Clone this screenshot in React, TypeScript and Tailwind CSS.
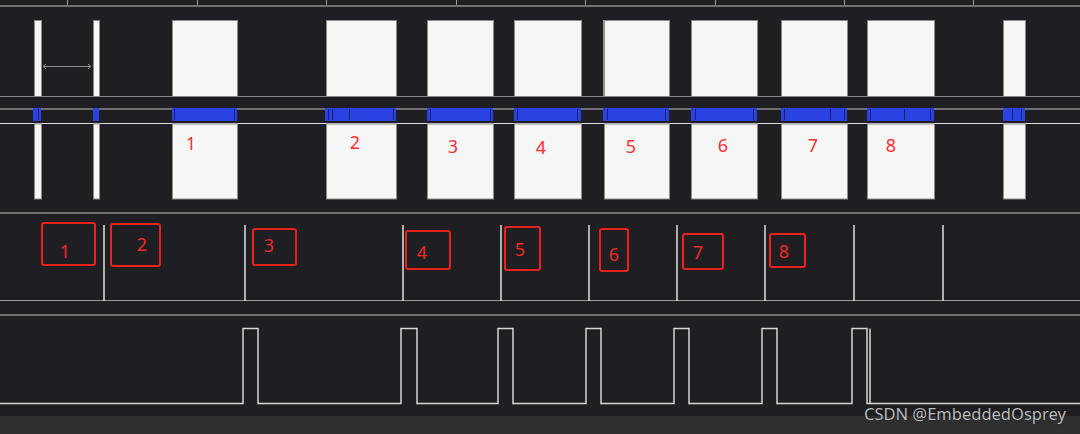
const W = 1080;

// channel pulses shared by the first two traces
const pulses: [number, number][] = [
  [34, 41], [93, 99], [172, 237], [326, 396], [427, 493], [514, 581],
  [604, 669], [691, 757], [781, 847], [867, 934], [1003, 1025],
];

const decode: { a: number; b: number; ticks: number[] }[] = [
  { a: 33, b: 41, ticks: [38] },
  { a: 93, b: 99, ticks: [] },
  { a: 172, b: 237, ticks: [174, 234] },
  { a: 325, b: 396, ticks: [328, 332, 349, 393] },
  { a: 427, b: 493, ticks: [430, 490] },
  { a: 514, b: 581, ticks: [517, 577] },
  { a: 603, b: 669, ticks: [607, 665] },
  { a: 691, b: 757, ticks: [695, 753] },
  { a: 781, b: 847, ticks: [784, 830, 844] },
  { a: 867, b: 934, ticks: [870, 904, 930] },
  { a: 1003, b: 1025, ticks: [1012, 1021] },
];

const rulerTicks = [67, 197, 326, 456, 585, 715, 844, 973];
const markers = [104, 245, 403, 501, 589, 677, 765, 854, 943];
const clock: [number, number][] = [[243, 258], [401, 417], [498, 513], [586, 601], [674, 689], [762, 777], [852, 867]];

function clockPath() {
  const lo = 87.5;
  const hi = 12.5;
  let d = `M0 ${lo}`;
  for (const [a, b] of clock) {
    d += ` H${a} V${hi} H${b} V${lo}`;
  }
  d += ` H870 V${hi} M870 ${lo} H${W}`;
  return d;
}

const boxes = [
  "left-[41px] top-[222px] w-[55px] h-[44px]",
  "left-[110px] top-[223px] w-[51px] h-[44px]",
  "left-[252px] top-[228px] w-[45px] h-[38px]",
  "left-[405px] top-[230px] w-[46px] h-[40px]",
  "left-[504px] top-[226px] w-[37px] h-[45px]",
  "left-[599px] top-[228px] w-[30px] h-[44px]",
  "left-[682px] top-[233px] w-[42px] h-[37px]",
  "left-[769px] top-[233px] w-[37px] h-[35px]",
];

const boxLabels = [
  { n: "1", c: "left-[65px] top-[251px]" },
  { n: "2", c: "left-[142px] top-[244px]" },
  { n: "3", c: "left-[269px] top-[245px]" },
  { n: "4", c: "left-[422px] top-[252px]" },
  { n: "5", c: "left-[520px] top-[249px]" },
  { n: "6", c: "left-[614px] top-[254px]" },
  { n: "7", c: "left-[698px] top-[252px]" },
  { n: "8", c: "left-[784px] top-[251px]" },
];

const pulseLabels = [
  { n: "1", c: "left-[191px] top-[143px]" },
  { n: "2", c: "left-[355px] top-[142px]" },
  { n: "3", c: "left-[453px] top-[146px]" },
  { n: "4", c: "left-[541px] top-[147px]" },
  { n: "5", c: "left-[631px] top-[146px]" },
  { n: "6", c: "left-[723px] top-[145px]" },
  { n: "7", c: "left-[813px] top-[145px]" },
  { n: "8", c: "left-[891px] top-[145px]" },
];

function Separator() {
  return <div className="h-[2px] w-full bg-[#707070]" />;
}

export default function App() {
  return (
    <div className="relative w-[1080px] h-[434px] overflow-hidden bg-[#1f1f23] font-['Noto_Sans',sans-serif]">
      <div className="flex flex-col">
        {/* ruler */}
        <svg width={W} height={5} className="block">
          {rulerTicks.map((x) => (
            <rect key={x} x={x} y={0} width={1} height={5} fill="#9a9a9a" />
          ))}
        </svg>
        <Separator />

        {/* channel 0 */}
        <svg width={W} height={101} className="block">
          <line x1={0} x2={W} y1={89.5} y2={89.5} stroke="#8a8a8a" strokeWidth={1} />
          {pulses.map(([a, b]) => (
            <rect key={a} x={a + 0.5} y={13.5} width={b - a} height={76} fill="#f6f6f6" stroke="#8a8a8a" strokeWidth={1} />
          ))}
          <line x1={603.5} x2={603.5} y1={13} y2={89} stroke="#9a9a9a" strokeWidth={1} />
          <line x1={44} x2={90} y1={59.5} y2={59.5} stroke="#8c8c8c" strokeWidth={1} />
          <path d="M46 57 L43 59.5 L46 62 M88 57 L91 59.5 L88 62" fill="none" stroke="#8c8c8c" strokeWidth={1} />
        </svg>

        {/* decoder lane */}
        <svg width={W} height={14} className="block">
          <rect x={0} y={0} width={W} height={2} fill="#707070" />
          {decode.map((s) => (
            <g key={s.a}>
              <rect x={s.a} y={0} width={s.b - s.a} height={13} fill="#2a42e2" />
              {s.ticks.map((t) => (
                <rect key={t} x={t} y={1} width={1} height={11} fill="#15206a" />
              ))}
            </g>
          ))}
        </svg>

        {/* channel 1 */}
        <svg width={W} height={90} className="block">
          <line x1={0} x2={W} y1={1.5} y2={1.5} stroke="#dcdcdc" strokeWidth={1} />
          {pulses.map(([a, b]) => (
            <rect key={a} x={a + 0.5} y={2} width={b - a} height={75} fill="#f6f6f6" stroke="#8a8a8a" strokeWidth={1} />
          ))}
        </svg>
        <Separator />

        {/* channel 2 markers */}
        <svg width={W} height={100} className="block">
          <line x1={0} x2={W} y1={86.5} y2={86.5} stroke="#9a9a9a" strokeWidth={1} />
          {markers.map((x) => (
            <line key={x} x1={x} x2={x} y1={11} y2={87} stroke="#e2e2e2" strokeWidth={1.5} />
          ))}
        </svg>
        <Separator />

        {/* channel 3 clock */}
        <svg width={W} height={100} className="block">
          <path d={clockPath()} fill="none" stroke="#d6d6d6" strokeWidth={1.5} />
        </svg>

        <div className="h-[18px] w-full bg-[#2f2f2f]" />
      </div>

      {/* annotations */}
      {pulseLabels.map((l) => (
        <div key={l.c} className={`absolute -translate-x-1/2 -translate-y-1/2 text-[18px] leading-none text-[#ff2d2d] ${l.c}`}>
          {l.n}
        </div>
      ))}
      {boxes.map((c) => (
        <div key={c} className={`absolute rounded-[3px] border-2 border-[#e8221c] ${c}`} />
      ))}
      {boxLabels.map((l) => (
        <div key={l.c} className={`absolute -translate-x-1/2 -translate-y-1/2 text-[18px] leading-none text-[#ee2a22] ${l.c}`}>
          {l.n}
        </div>
      ))}

      <div className="absolute left-[864px] top-[406px] text-[16.5px] leading-none text-[#bdbdbd] whitespace-nowrap [text-shadow:0_0_1px_#000]">
        CSDN @EmbeddedOsprey
      </div>
    </div>
  );
}
